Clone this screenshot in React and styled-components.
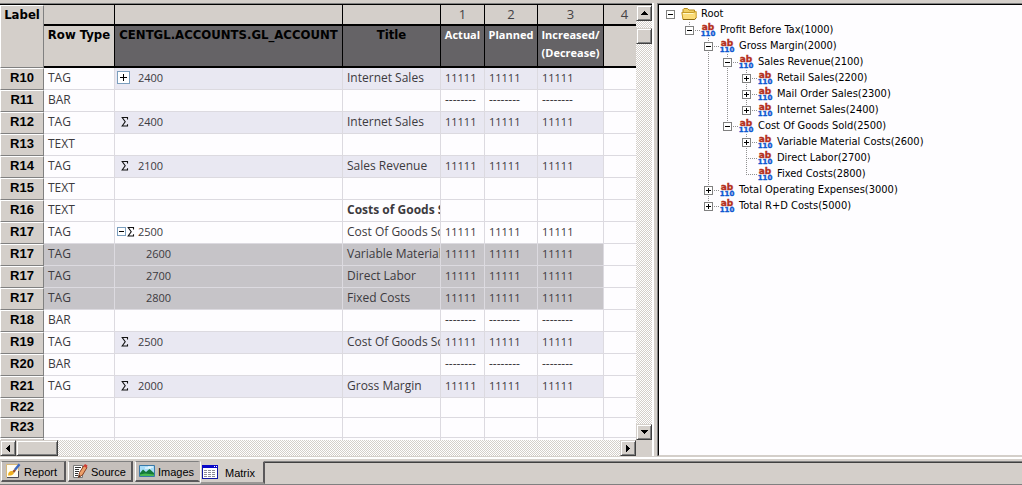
import React, { useState } from "react"
import styled, { createGlobalStyle, css } from "styled-components"

const face = "#d4cfca"
const gridLine = "#dcdae0"
const smallFont = `"Open Sans", "Noto Sans", sans-serif`
const tahoma = `"DejaVu Sans Condensed", "DejaVu Sans", sans-serif`
const arial = `"Liberation Sans", Arial, sans-serif`

const GlobalStyle = createGlobalStyle`
    * {
        box-sizing: border-box;
    }
    body {
        margin: 0;
        background: ${face};
        color: #000000;
        font: 11px ${tahoma};
    }
    button {
        font: inherit;
        color: inherit;
        padding: 0;
        border: 0;
    }
`

const Shell = styled.div`
    display: flex;
    flex-direction: column;
    height: 100vh;
    padding-top: 3px;
    border-bottom: 1px solid #808080;
    overflow: hidden;
`

const Main = styled.main`
    display: flex;
    flex: 1;
    min-height: 0;
`

const GridPane = styled.section`
    display: grid;
    flex: 1;
    min-width: 0;
    grid-template-columns: minmax(0, 1fr) 16px;
    grid-template-rows: minmax(0, 1fr) 16px;
    border-top: 1px solid #808080;
`

const GridView = styled.div`
    overflow: hidden;
    border-top: 1px solid #000000;
    background: #fefdff;
`

const Splitter = styled.div`
    width: 6px;
    background: ${face};
    border-left: 2px solid #ffffff;
    border-right: 1px solid #808080;
`

/* matrix table */

const Table = styled.table`
    width: 100%;
    table-layout: fixed;
    border-collapse: separate;
    border-spacing: 0;
`

const Col = styled.col`
    width: ${props => props.$width};
`

const HeadCell = styled.th`
    height: 21px;
    padding: 0 0 1px;
    vertical-align: top;
    background: ${face};
    border-right: 1px solid #000000;
    border-bottom: 2px solid #000000;
    color: #444244;
    font: 13px/18px ${smallFont};
    &:last-child {
        border-right: 0;
        padding-left: 9px;
    }
`

const LabelHead = styled.th`
    padding: 1px 0 0;
    vertical-align: top;
    background: ${face};
    border: 1px solid #808080;
    border-top-color: #ffffff;
    border-left-color: #ffffff;
    font: bold 13px/16px ${tahoma};
`

const NameHead = styled.th`
    height: 42px;
    padding: 0;
    vertical-align: top;
    border-right: ${props => (props.$plain ? 0 : 1)}px solid #000000;
    border-bottom: 2px solid #000000;
    background: ${props => (props.$light ? face : "#656366")};
    color: ${props => (props.$inverse ? "#ffffff" : "#000000")};
    font: bold 13px/18px ${tahoma};
    white-space: nowrap;
    ${props =>
        props.$inverse &&
        css`
            font: bold 11px/18px ${smallFont};
        `}
`

const RowLabel = styled.th`
    padding: 0 0 2px;
    background: ${face};
    border: 1px solid #808080;
    border-top-color: #ffffff;
    border-left-color: #ffffff;
    font: bold 13px/16px ${arial};
`

const fills = {
    tag: "#e9e8f2",
    picked: "#c6c4c8"
}

const Cell = styled.td`
    height: ${props => (props.$short ? 20 : 22)}px;
    padding: 0 0 2px 4px;
    overflow: hidden;
    white-space: nowrap;
    vertical-align: middle;
    border-right: 1px solid ${gridLine};
    border-bottom: 1px solid ${gridLine};
    background: ${props => fills[props.$fill] || "#fefdff"};
    color: #3c3a3e;
    font: ${props => (props.$bold ? "bold" : "normal")} 12px/16px ${smallFont};
    &:last-child {
        border-right: 0;
    }
`

const ValueCell = styled(Cell)`
    font-size: ${props => (props.$dashes ? 12 : 11)}px;
`

const AccountCell = styled(Cell)`
    padding-left: 2px;
    font-size: 11px;
`

const Account = styled.div`
    display: flex;
    align-items: center;
    padding-left: ${props => (props.$nested ? 8 : 0)}px;
`

const Marker = styled.span`
    display: flex;
    align-items: center;
    gap: 1px;
    width: 21px;
    padding-left: ${props => (props.$sigmaOnly ? 4 : 0)}px;
`

const BoxButton = styled.button`
    display: flex;
    align-items: center;
    justify-content: center;
    flex: none;
    width: ${props => props.$size}px;
    height: ${props => props.$size}px;
    background: #ffffff;
    border: 1px solid ${props => props.$edge || "#808080"};
`

/* scroll bars */

const ScrollTrack = styled.div`
    display: flex;
    flex-direction: ${props => (props.$vertical ? "column" : "row")};
    justify-content: space-between;
    background: repeating-conic-gradient(#ffffff 0 25%, ${face} 0 50%) 0 0 / 2px 2px;
    border-top: ${props => (props.$vertical ? 1 : 0)}px solid #000000;
`

const ScrollGroup = styled.div`
    display: flex;
    flex-direction: ${props => (props.$vertical ? "column" : "row")};
    gap: ${props => (props.$vertical ? 7 : 0)}px;
`

const raised = css`
    background: ${face};
    border: 1px solid #404040;
    border-top-color: ${face};
    border-left-color: ${face};
    box-shadow: inset 1px 1px #ffffff, inset -1px -1px #808080;
`

const ScrollButton = styled.button`
    ${raised}
    display: flex;
    align-items: center;
    justify-content: center;
    width: 16px;
    height: 16px;
`

const Thumb = styled.div`
    ${raised}
    width: ${props => props.$width}px;
    height: 16px;
`

const Corner = styled.div`
    background: ${face};
`

/* account tree */

const TreePane = styled.aside`
    flex: 0 0 364px;
    overflow: hidden;
    background: #fefdff;
    border: 1px solid #000000;
    border-right: 0;
    border-bottom-color: ${face};
    box-shadow: 0 -1px #808080;
    margin-top: 1px;
    padding: 1px 0 0 7px;
`

const TreeList = styled.ul`
    list-style: none;
    margin: 0;
    padding: 0;
    & & {
        padding-left: 19px;
    }
`

const stem = "repeating-linear-gradient(#909090 0 1px, transparent 1px 2px)"

const TreeItem = styled.li`
    background: ${props => (props.$root ? "none" : stem)} 4px 0 / 1px 100% no-repeat;
    &:last-child {
        background-size: 1px 9px;
    }
`

const TreeRow = styled.div`
    display: flex;
    align-items: center;
    height: 16px;
    white-space: nowrap;
    font: 11px/16px ${tahoma};
`

const Branch = styled.span`
    display: flex;
    align-items: center;
    width: 15px;
    height: 16px;
    background: repeating-linear-gradient(90deg, #909090 0 1px, transparent 1px 2px)
        4px 8px / ${props => (props.$root ? 0 : 12)}px 1px no-repeat;
`

const TreeText = styled.span`
    padding-left: 4px;
`

/* bottom tabs */

const TabBar = styled.div`
    display: flex;
    align-items: flex-start;
    height: 28px;
    padding-top: 5px;
    background: linear-gradient(${face} 0 1px, #ffffff 1px 3px, ${face} 3px);
`

const Tabs = styled.div`
    display: flex;
    align-items: flex-start;
    padding-left: 1px;
`

const Tab = styled.button`
    display: flex;
    align-items: center;
    gap: 3px;
    width: 65px;
    height: ${props => (props.$active ? 23 : 21)}px;
    margin-right: ${props => (props.$active || props.$last ? 0 : 2)}px;
    padding-left: ${props => (props.$active ? 1 : 3)}px;
    background: ${props => (props.$active ? face : "#c5bfbb")};
    border-top: 1px solid ${props => (props.$active ? face : "#808080")};
    border-left: 1px solid #ffffff;
    border-right: 2px solid ${props => (props.$last ? "#c5bfbb" : "#5a585a")};
    border-bottom: 2px solid ${props => (props.$active ? "#9a9795" : "#5a585a")};
    font: 11px/16px ${arial};
`

const TabText = styled.span`
    padding: 2px 0 0 ${props => (props.$active ? 4 : 0)}px;
`

const TabFill = styled.div`
    flex: 1;
    height: 2px;
    border-top: 1px solid #808080;
    border-bottom: 1px solid #404040;
`

const Sign = ({ open }) => (
    <svg width="7" height="7" viewBox="0 0 7 7" shapeRendering="crispEdges" aria-hidden="true">
        <path d={open ? "M1 3.5H6" : "M1 3.5H6M3.5 1V6"} stroke="#000" fill="none" />
    </svg>
)

const BigPlus = () => (
    <svg width="7" height="7" viewBox="0 0 7 7" shapeRendering="crispEdges" aria-hidden="true">
        <path d="M0 3.5H7M3.5 0V7" stroke="#000" fill="none" />
    </svg>
)

const Sigma = () => (
    <svg width="8" height="10" viewBox="0 0 8 10" aria-hidden="true">
        <path d="M6.5 2.5V.5H1.2L4.2 4.8 1.2 9H6.5V7.2" stroke="#111" strokeWidth="1.1" fill="none" />
    </svg>
)

const arrows = {
    up: "M3 0H4V1H5V2H6V3H7V4H0V3H1V2H2V1H3Z",
    down: "M0 0H7V1H6V2H5V3H4V4H3V3H2V2H1V1H0Z",
    left: "M4 0V7H3V6H2V5H1V4H0V3H1V2H2V1H3V0Z",
    right: "M0 0H1V1H2V2H3V3H4V4H3V5H2V6H1V7H0Z"
}

const Arrow = ({ dir }) => {
    const tall = dir === "left" || dir === "right"
    return (
        <svg width={tall ? 4 : 7} height={tall ? 7 : 4} shapeRendering="crispEdges" aria-hidden="true">
            <path d={arrows[dir]} />
        </svg>
    )
}

const Folder = () => (
    <svg width="16" height="16" viewBox="0 0 16 16" aria-hidden="true">
        <path d="M2 12.5V3.5L3 2.5H6.5L8 4H13.5V12.5Z" fill="#f0cf62" stroke="#b58a1c" />
        <path d="M.8 6.5H12L15.2 5.5V12L13.5 13.5H2Z" fill="#fbdc78" stroke="#c59b2a" />
        <path d="M2 7.5H12.5" stroke="#fff8c8" />
        <path d="M2 13.5H13.5L15.2 12" fill="none" stroke="#8e6b12" />
    </svg>
)

const AccountIcon = () => (
    <svg width="16" height="16" viewBox="0 0 16 16" aria-hidden="true">
        <g fontFamily="DejaVu Sans, sans-serif" fontWeight="bold" textAnchor="middle" strokeWidth=".4">
            <text x="8" y="8" fontSize="9" fill="#b4301c" stroke="#b4301c">ab</text>
            <text x="8" y="14" fontSize="7" fill="#1058d0" stroke="#1058d0">110</text>
        </g>
    </svg>
)

const ReportIcon = () => (
    <svg width="16" height="16" viewBox="0 0 16 16" aria-hidden="true">
        <path d="M1.5 1.5H13.5V14.5H1.5Z" fill="#fffdf4" stroke="#d8b878" />
        <path d="M2 14.5H13.5V8" fill="none" stroke="#4c4a58" />
        <path d="M3 12.5C3 9 5 7.5 7.5 8L9 10C8 12 6 12.8 3 12.5Z" fill="#f0b020" />
        <path d="M7.5 8L9.5 6 11 7.5 9 10Z" fill="#a05028" />
        <path d="M10 6.8L14.5 1.2" stroke="#3d68c0" strokeWidth="2.4" />
    </svg>
)

const SourceIcon = () => (
    <svg width="16" height="16" viewBox="0 0 16 16" aria-hidden="true">
        <path d="M1.5 2.5H10.5V14.5H1.5Z" fill="#fff" stroke="#777" />
        <path d="M3 4.5H9M3 6.5H7M3 8.5H7M3 10.5H6M3 12.5H6" stroke="#333" />
        <path d="M6.5 14.5L7.5 9.5 12 2.5 15 4.5 10.5 12Z" fill="#eda06a" stroke="#8a4022" />
        <path d="M11.5 3L13 1 15.5 2.5 14.5 5Z" fill="#cf3c34" />
        <path d="M6.5 14.5L7 12 8.5 13Z" fill="#222" />
    </svg>
)

const ImagesIcon = () => (
    <svg width="16" height="16" viewBox="0 0 16 16" aria-hidden="true">
        <path d="M.5 2.5H15.5V13.5H.5Z" fill="#a8dcf8" stroke="#3878a8" />
        <path d="M6 5H12M9 4H14" stroke="#fff" />
        <path d="M1 10L4 6.5 7 9 10.5 6 15 10V12H1Z" fill="#14783a" />
        <path d="M1 11.5L6 10.5 15 11.5V13H1Z" fill="#48b850" />
    </svg>
)

const MatrixIcon = () => (
    <svg width="16" height="16" viewBox="0 0 16 16" shapeRendering="crispEdges" aria-hidden="true">
        <path d="M.5 1.5H15.5V14.5H.5Z" fill="#fff" stroke="#1018a0" />
        <path d="M0 1H16V4H0Z" fill="#0808c8" />
        <path d="M12 2H13V3H12ZM14 2H15V3H14Z" fill="#fff" />
        <path d="M2 6.5H14M2 8.5H14M2 10.5H14M2 12.5H14" stroke="#8c8c98" strokeDasharray="3 1" />
    </svg>
)

const rows = [
    { label: "R10", type: "TAG", mark: "plus", account: "2400", title: "Internet Sales", fill: "tag" },
    { label: "R11", type: "BAR" },
    { label: "R12", type: "TAG", mark: "sum", account: "2400", title: "Internet Sales", fill: "tag" },
    { label: "R13", type: "TEXT" },
    { label: "R14", type: "TAG", mark: "sum", account: "2100", title: "Sales Revenue", fill: "tag" },
    { label: "R15", type: "TEXT" },
    { label: "R16", type: "TEXT", title: "Costs of Goods Sold", bold: true },
    { label: "R17", type: "TAG", mark: "open", account: "2500", title: "Cost Of Goods Sold" },
    { label: "R17", type: "TAG", account: "2600", title: "Variable Material", fill: "picked" },
    { label: "R17", type: "TAG", account: "2700", title: "Direct Labor", fill: "picked" },
    { label: "R17", type: "TAG", account: "2800", title: "Fixed Costs", fill: "picked" },
    { label: "R18", type: "BAR" },
    { label: "R19", type: "TAG", mark: "sum", account: "2500", title: "Cost Of Goods Sold", fill: "tag" },
    { label: "R20", type: "BAR" },
    { label: "R21", type: "TAG", mark: "sum", account: "2000", title: "Gross Margin", fill: "tag" },
    { label: "R22", short: true },
    { label: "R23", short: true },
    { label: "", short: true }
]

const values = { TAG: "11111", BAR: "--------" }

const tree = {
    name: "Root",
    open: true,
    children: [
        {
            name: "Profit Before Tax(1000)",
            open: true,
            children: [
                {
                    name: "Gross Margin(2000)",
                    open: true,
                    children: [
                        {
                            name: "Sales Revenue(2100)",
                            open: true,
                            children: [
                                { name: "Retail Sales(2200)", children: [] },
                                { name: "Mail Order Sales(2300)", children: [] },
                                { name: "Internet Sales(2400)", children: [] }
                            ]
                        },
                        {
                            name: "Cost Of Goods Sold(2500)",
                            open: true,
                            children: [
                                { name: "Variable Material Costs(2600)", children: [] },
                                { name: "Direct Labor(2700)" },
                                { name: "Fixed Costs(2800)" }
                            ]
                        }
                    ]
                },
                { name: "Total Operating Expenses(3000)", children: [] },
                { name: "Total R+D Costs(5000)", children: [] }
            ]
        }
    ]
}

const tabs = [
    { name: "Report", Icon: ReportIcon },
    { name: "Source", Icon: SourceIcon },
    { name: "Images", Icon: ImagesIcon },
    { name: "Matrix", Icon: MatrixIcon }
]

const RowMarker = ({ mark }) => (
    <Marker $sigmaOnly={mark === "sum"}>
        {mark === "plus" && (
            <BoxButton $size={13} $edge="#7b9ebd" aria-label="Expand row">
                <BigPlus />
            </BoxButton>
        )}
        {mark === "open" && (
            <BoxButton $size={9} $edge="#7b9ebd" aria-label="Collapse row">
                <Sign open />
            </BoxButton>
        )}
        {mark !== "plus" && mark && <Sigma />}
    </Marker>
)

const MatrixRow = ({ row }) => (
    <tr>
        <RowLabel scope="row">{row.label}</RowLabel>
        <Cell $short={row.short} $fill={row.fill === "picked" ? "picked" : ""}>
            {row.type}
        </Cell>
        <AccountCell $short={row.short} $fill={row.fill}>
            {row.account && (
                <Account $nested={!row.mark}>
                    <RowMarker mark={row.mark} />
                    {row.account}
                </Account>
            )}
        </AccountCell>
        <Cell $short={row.short} $fill={row.fill} $bold={row.bold}>
            {row.title}
        </Cell>
        {[1, 2, 3].map(n => (
            <ValueCell key={n} $short={row.short} $fill={row.fill} $dashes={row.type === "BAR"}>
                {values[row.type]}
            </ValueCell>
        ))}
        <Cell $short={row.short} />
    </tr>
)

const Matrix = () => (
    <Table>
        <colgroup>
            {["44px", "71px", "228px", "98px", "44px", "53px", "66px", "auto"].map((width, i) => (
                <Col key={i} $width={width} />
            ))}
        </colgroup>
        <thead>
            <tr>
                <LabelHead rowSpan={2}>Label</LabelHead>
                {["", "", "", "1", "2", "3", "4"].map((n, i) => (
                    <HeadCell key={i}>{n}</HeadCell>
                ))}
            </tr>
            <tr>
                <NameHead $light>Row Type</NameHead>
                <NameHead>CENTGL.ACCOUNTS.GL_ACCOUNT</NameHead>
                <NameHead>Title</NameHead>
                <NameHead $inverse>Actual</NameHead>
                <NameHead $inverse>Planned</NameHead>
                <NameHead $inverse>
                    Increased/
                    <br />
                    (Decrease)
                </NameHead>
                <NameHead $light $plain />
            </tr>
        </thead>
        <tbody>
            {rows.map((row, i) => (
                <MatrixRow key={i} row={row} />
            ))}
        </tbody>
    </Table>
)

const TreeNode = ({ node, root }) => {
    const [open, setOpen] = useState(Boolean(node.open))
    return (
        <TreeItem $root={root}>
            <TreeRow>
                <Branch $root={root}>
                    {node.children && (
                        <BoxButton
                            $size={9}
                            aria-expanded={open}
                            aria-label={node.name}
                            onClick={() => setOpen(!open)}
                        >
                            <Sign open={open} />
                        </BoxButton>
                    )}
                </Branch>
                {root ? <Folder /> : <AccountIcon />}
                <TreeText>{node.name}</TreeText>
            </TreeRow>
            {open && node.children.length > 0 && (
                <TreeList>
                    {node.children.map(child => (
                        <TreeNode key={child.name} node={child} />
                    ))}
                </TreeList>
            )}
        </TreeItem>
    )
}

const App = () => {
    const [active, setActive] = useState("Matrix")
    return (
        <Shell>
            <GlobalStyle />
            <Main>
                <GridPane>
                    <GridView>
                        <Matrix />
                    </GridView>
                    <ScrollTrack $vertical>
                        <ScrollGroup $vertical>
                            <ScrollButton aria-label="Scroll up">
                                <Arrow dir="up" />
                            </ScrollButton>
                            <Thumb $width={16} />
                        </ScrollGroup>
                        <ScrollButton aria-label="Scroll down">
                            <Arrow dir="down" />
                        </ScrollButton>
                    </ScrollTrack>
                    <ScrollTrack>
                        <ScrollGroup>
                            <ScrollButton aria-label="Scroll left">
                                <Arrow dir="left" />
                            </ScrollButton>
                            <Thumb $width={42} />
                        </ScrollGroup>
                        <ScrollButton aria-label="Scroll right">
                            <Arrow dir="right" />
                        </ScrollButton>
                    </ScrollTrack>
                    <Corner />
                </GridPane>
                <Splitter />
                <TreePane>
                    <TreeList>
                        <TreeNode node={tree} root />
                    </TreeList>
                </TreePane>
            </Main>
            <TabBar>
                <Tabs role="tablist">
                    {tabs.map(({ name, Icon }, i) => (
                        <Tab
                            key={name}
                            role="tab"
                            aria-selected={name === active}
                            $active={name === active}
                            $last={tabs[i + 1]?.name === active}
                            onClick={() => setActive(name)}
                        >
                            <Icon />
                            <TabText $active={name === active}>{name}</TabText>
                        </Tab>
                    ))}
                </Tabs>
                <TabFill />
            </TabBar>
        </Shell>
    )
}

export default App
